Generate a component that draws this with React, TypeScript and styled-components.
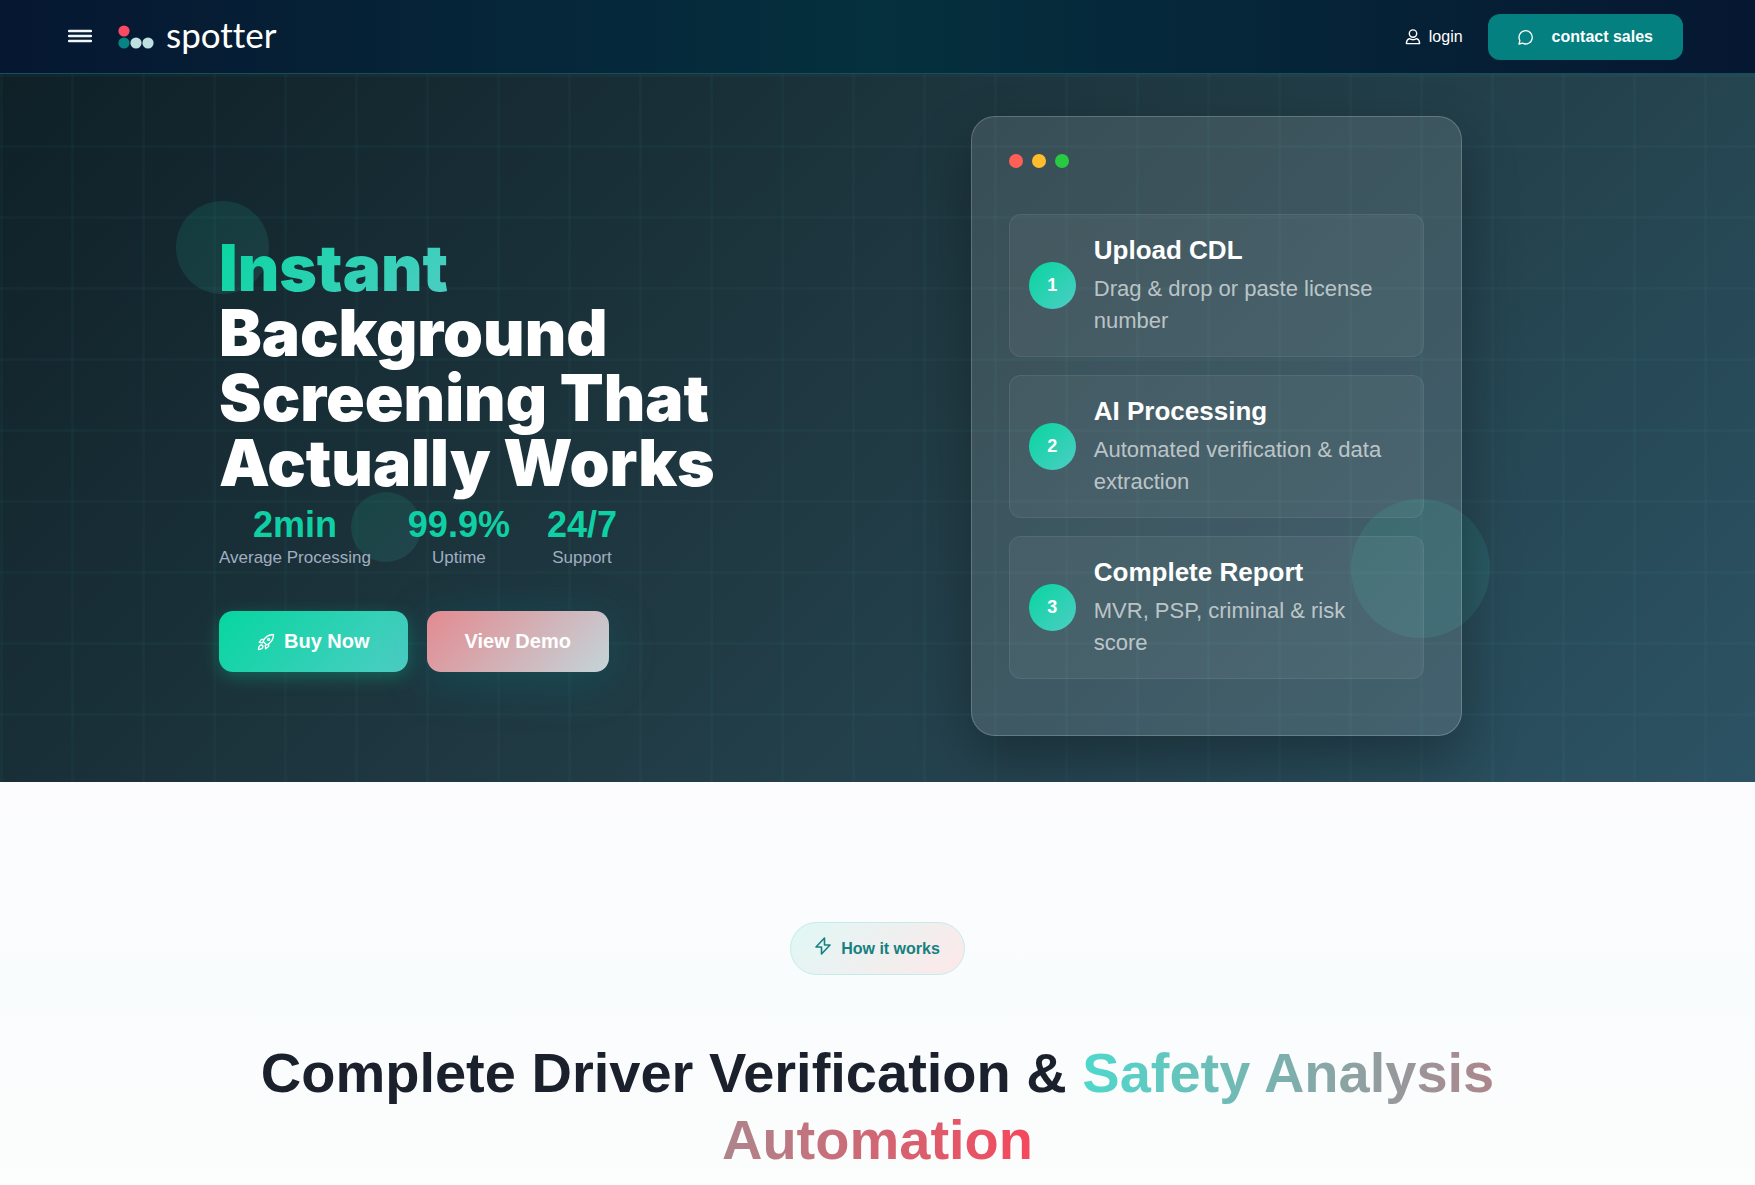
import React from "react";
import styled, { createGlobalStyle } from "styled-components";

const GlobalStyle = createGlobalStyle`
  * { box-sizing: border-box; }
  body { margin: 0; background: #fbfcfe; font-family: "Liberation Sans", Arial, sans-serif; }
  h1, h2, h3, p, dl, dt, dd, ol { margin: 0; padding: 0; }
  ol { list-style: none; }
  a { color: inherit; text-decoration: none; }
  button { font-family: inherit; border: 0; cursor: pointer; }
`;

const Header = styled.header`
  display: flex;
  align-items: center;
  justify-content: space-between;
  height: 74px;
  padding: 0 72px 0 68px;
  color: #fff;
  background: linear-gradient(90deg, #061731 0%, #05303e 50%, #061731 100%);
  border-bottom: 1px solid #14505a;
`;

const HeaderGroup = styled.div<{ $gap: number }>`
  display: flex;
  align-items: center;
  gap: ${(p) => p.$gap}px;
`;

const MenuButton = styled.button`
  display: flex;
  padding: 0 0 2px;
  color: #f2f6fa;
  background: none;
`;

const Logo = styled.a`
  display: flex;
  align-items: center;
  gap: 12px;
`;

const Wordmark = styled.span`
  font: 400 35px/40px Lato, sans-serif;
  font-variant-ligatures: none;
  padding-bottom: 6px;
`;

const LoginLink = styled.a`
  display: flex;
  align-items: center;
  gap: 8px;
  font-size: 16px;
`;

const ContactButton = styled.button`
  display: flex;
  align-items: center;
  gap: 18px;
  height: 46px;
  padding: 0 30px;
  border-radius: 12px;
  color: #fff;
  background: #03807f;
  font-size: 16px;
  font-weight: 700;
`;

const Hero = styled.section`
  position: relative;
  overflow: hidden;
  padding: 42px 219px 46px;
  background:
    linear-gradient(rgba(78, 205, 196, 0.03) 3px, transparent 3px) 0 0 / 71px 71px,
    linear-gradient(90deg, rgba(78, 205, 196, 0.03) 3px, transparent 3px) 0 0 / 71px 71px,
    linear-gradient(135deg, #0f2027 0%, #203a43 50%, #2c5364 100%);
`;

const Bubble = styled.div<{ $size: number; $left: string; $top: string }>`
  position: absolute;
  left: ${(p) => p.$left};
  top: ${(p) => p.$top};
  width: ${(p) => p.$size}px;
  height: ${(p) => p.$size}px;
  border-radius: 50%;
  background: linear-gradient(135deg, #06d6a0, #4ecdc4);
  opacity: 0.12;
  pointer-events: none;
`;

const HeroGrid = styled.div`
  position: relative;
  display: grid;
  grid-template-columns: 1fr 1fr;
  gap: 38px;
  align-items: center;
`;

const HeroCopy = styled.div`
  padding-top: 55px;
`;

const Headline = styled.h1`
  margin-bottom: 9px;
  font: 900 64px/65px "Arial Black", Inter, sans-serif;
  color: #fff;
`;

const HeadlineAccent = styled.span`
  color: transparent;
  background: linear-gradient(135deg, #06d6a0, #4ecdc4);
  background-clip: text;
  -webkit-background-clip: text;
`;

const Stats = styled.dl`
  display: flex;
  gap: 37px;
`;

const Stat = styled.div`
  display: flex;
  flex-direction: column-reverse;
  text-align: center;
`;

const StatLabel = styled.dt`
  font-size: 17px;
  line-height: 24px;
  color: #a0aec0;
`;

const StatValue = styled.dd`
  font-size: 36px;
  font-weight: 700;
  line-height: 42px;
  color: #0fd0a4;
`;

const Actions = styled.div`
  display: flex;
  gap: 19px;
  margin-top: 41px;
`;

const ActionButton = styled.button<{ $variant: "primary" | "demo" }>`
  display: flex;
  align-items: center;
  gap: 9px;
  height: 61px;
  padding: 0 38px;
  border-radius: 14px;
  color: #fff;
  font-size: 20px;
  font-weight: 700;
  background: ${(p) =>
    p.$variant === "primary"
      ? "linear-gradient(135deg, #06d6a0, #4ecdc4)"
      : "linear-gradient(135deg, #e38a90, #c3d5d9)"};
  box-shadow: ${(p) =>
    p.$variant === "primary"
      ? "0 5px 18px rgba(6, 214, 160, 0.3)"
      : "0 9px 47px rgba(6, 128, 140, 0.3)"};
`;

const ProcessCard = styled.div`
  width: 100%;
  max-width: 491px;
  justify-self: center;
  padding: 37px 37px 56px;
  border: 1px solid rgba(255, 255, 255, 0.2);
  border-radius: 24px;
  background: rgba(255, 255, 255, 0.12);
  box-shadow: 0 24px 56px rgba(0, 0, 0, 0.3);
`;

const WindowDots = styled.div`
  display: flex;
  gap: 9px;
  margin-bottom: 46px;
`;

const WindowDot = styled.span<{ $color: string }>`
  width: 14px;
  height: 14px;
  border-radius: 50%;
  background: ${(p) => p.$color};
`;

const StepList = styled.ol`
  display: grid;
  gap: 18px;
`;

const Step = styled.li`
  display: flex;
  align-items: center;
  gap: 18px;
  padding: 19px;
  border: 1px solid rgba(255, 255, 255, 0.07);
  border-radius: 12px;
  background: rgba(255, 255, 255, 0.05);
`;

const StepNumber = styled.span`
  display: grid;
  place-items: center;
  flex: none;
  width: 47px;
  height: 47px;
  border-radius: 50%;
  color: #fff;
  font-size: 18px;
  font-weight: 700;
  background: linear-gradient(135deg, #06d6a0, #4ecdc4);
`;

const StepTitle = styled.h3`
  margin-bottom: 6px;
  font-size: 26px;
  line-height: 33px;
  color: #fff;
`;

const StepText = styled.p`
  font-size: 22px;
  line-height: 32px;
  color: rgba(255, 255, 255, 0.65);
`;

const HowSection = styled.section`
  display: flex;
  flex-direction: column;
  align-items: center;
  padding: 140px 219px 12px;
  background: linear-gradient(180deg, #fcfcfe 0%, #f9fcfd 50%, #fcfdfd 100%);
`;

const Pill = styled.span`
  display: flex;
  align-items: center;
  gap: 10px;
  height: 53px;
  padding: 0 24px;
  border: 1px solid #c5ece8;
  border-radius: 27px;
  background: linear-gradient(135deg, #e0f8f5, #fde8ea);
  color: #15807f;
  font-size: 16px;
  font-weight: 700;
`;

const PillIcon = styled.svg`
  margin-bottom: 6px;
`;

const SectionTitle = styled.h2`
  margin-top: 64px;
  font-size: 56px;
  line-height: 67px;
  text-align: center;
  color: #1a202c;
`;

const TitleAccent = styled.span`
  color: transparent;
  background: linear-gradient(90deg, #4ed8cc, #f5475c);
  background-clip: text;
  -webkit-background-clip: text;
`;

const stats = [
  { value: "2min", label: "Average Processing" },
  { value: "99.9%", label: "Uptime" },
  { value: "24/7", label: "Support" },
];

const steps = [
  { title: "Upload CDL", text: "Drag & drop or paste license number" },
  { title: "AI Processing", text: "Automated verification & data extraction" },
  { title: "Complete Report", text: "MVR, PSP, criminal & risk score" },
];

export default function App() {
  return (
    <>
      <GlobalStyle />
      <Header>
        <HeaderGroup $gap={26}>
          <MenuButton aria-label="Open menu">
            <svg width="24" height="24" viewBox="0 0 24 24" stroke="currentColor" strokeWidth="2.400" strokeLinecap="round">
              <path d="M1 7h22M1 12h22M1 17h22" />
            </svg>
          </MenuButton>
          <Logo href="#">
            <svg width="36" height="24" viewBox="0 0 36 24">
              <circle cx="6" cy="6" r="5.6" fill="#f94a63" />
              <circle cx="6" cy="18" r="5.6" fill="#078381" />
              <circle cx="18" cy="18" r="5.6" fill="#bfe0e0" />
              <circle cx="30" cy="18" r="5.6" fill="#bfe0e0" />
            </svg>
            <Wordmark>spotter</Wordmark>
          </Logo>
        </HeaderGroup>
        <HeaderGroup $gap={25}>
          <LoginLink href="#">
            <svg width="16" height="16" viewBox="0 0 16 16" fill="none" stroke="currentColor" strokeWidth="1.4" strokeLinejoin="round">
              <circle cx="8" cy="4.6" r="3.7" />
              <path d="M4.300 9.700q3.700 2 7.400 0 2.900 1.200 2.900 4.900H1.400q0-3.700 2.900-4.900z" />
            </svg>
            login
          </LoginLink>
          <ContactButton>
            <svg width="16" height="16" viewBox="0 0 16 16" fill="none" stroke="currentColor" strokeWidth="1.3" strokeLinejoin="round">
              <path d="M1 15l.9-3.400A6.600 6.600 0 1 1 4.600 14.200z" />
            </svg>
            contact sales
          </ContactButton>
        </HeaderGroup>
      </Header>

      <Hero>
        <Bubble $size={93} $left="10%" $top="18%" />
        <Bubble $size={139} $left="77%" $top="60%" />
        <Bubble $size={70} $left="20%" $top="59%" />
        <HeroGrid>
          <HeroCopy>
            <Headline>
              <HeadlineAccent>Instant</HeadlineAccent>
              <br />
              Background
              <br />
              Screening That
              <br />
              Actually Works
            </Headline>
            <Stats>
              {stats.map((s) => (
                <Stat key={s.label}>
                  <StatLabel>{s.label}</StatLabel>
                  <StatValue>{s.value}</StatValue>
                </Stat>
              ))}
            </Stats>
            <Actions>
              <ActionButton $variant="primary">
                <svg width="18" height="18" viewBox="0 0 24 24" fill="none" stroke="currentColor" strokeWidth="1.8" strokeLinecap="round" strokeLinejoin="round">
                  <path d="M8 11C11 5 15 2 22 2c0 7-3 11-9 14z" />
                  <path d="M9.500 8.500H6L3 12.500l4.500.5M15.500 14.500V18L11.500 21l-.5-4.500" />
                  <circle cx="15.500" cy="8.500" r="1.300" />
                  <path d="M7.500 16.500C4.500 15 2 17.500 2 22c4.500 0 7-2.500 5.500-5.500z" />
                </svg>
                Buy Now
              </ActionButton>
              <ActionButton $variant="demo">View Demo</ActionButton>
            </Actions>
          </HeroCopy>
          <ProcessCard>
            <WindowDots>
              <WindowDot $color="#ff5f57" />
              <WindowDot $color="#ffbd2e" />
              <WindowDot $color="#28ca42" />
            </WindowDots>
            <StepList>
              {steps.map((s, i) => (
                <Step key={s.title}>
                  <StepNumber>{i + 1}</StepNumber>
                  <div>
                    <StepTitle>{s.title}</StepTitle>
                    <StepText>{s.text}</StepText>
                  </div>
                </Step>
              ))}
            </StepList>
          </ProcessCard>
        </HeroGrid>
      </Hero>

      <HowSection>
        <Pill>
          <PillIcon width="16" height="18" viewBox="0 0 16 18" fill="none" stroke="currentColor" strokeWidth="1.6" strokeLinejoin="round">
            <path d="M9.500 1L1 10h5.500L6.500 17 15 8H9.500z" />
          </PillIcon>
          How it works
        </Pill>
        <SectionTitle>
          Complete Driver Verification &amp; <TitleAccent>Safety Analysis Automation</TitleAccent>
        </SectionTitle>
      </HowSection>
    </>
  );
}
